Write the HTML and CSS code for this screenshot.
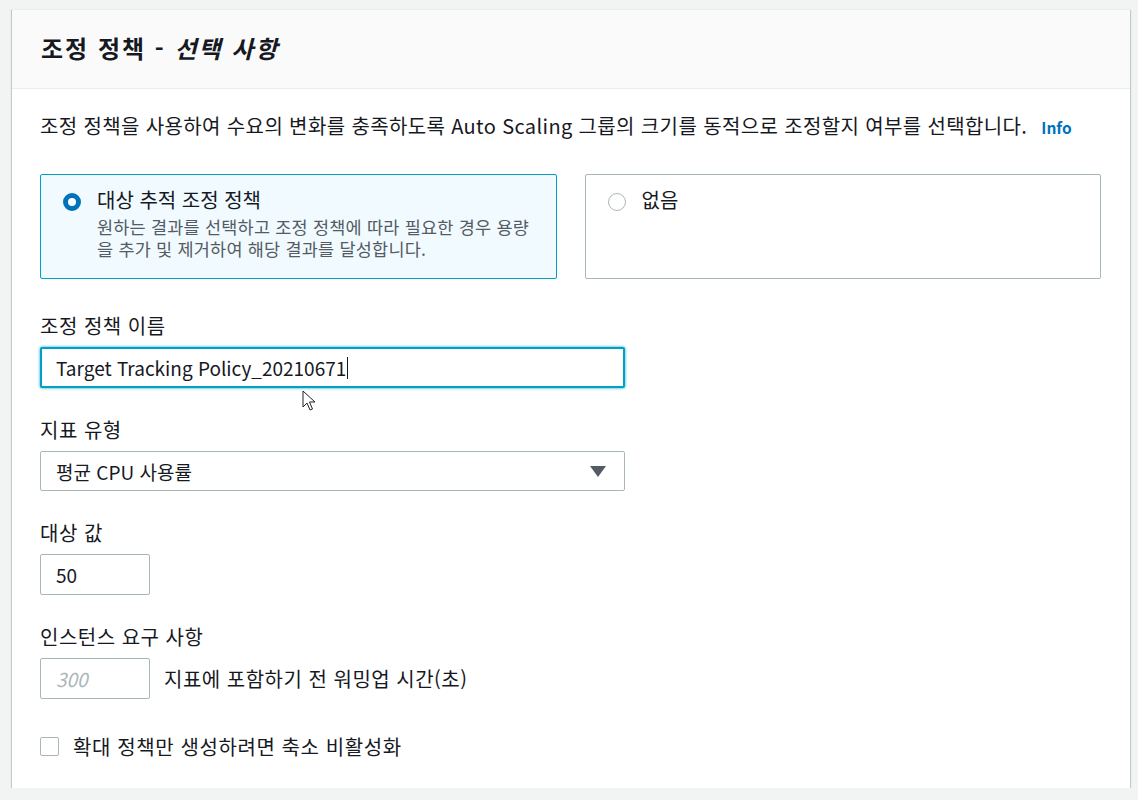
FILE: index.html
```html
<!DOCTYPE html>
<html lang="ko">
<head>
    <meta charset="UTF-8" />
    <title>조정 정책</title>
    <link rel="stylesheet" href="styles.css">
</head>
<body>
    <div class="panel">
        <div class="panel-header">
            <h2>조정 정책 - <i>선택 사항</i></h2>
        </div>
        <div class="panel-body">
            <p class="desc">조정 정책을 사용하여 수요의 변화를 충족하도록 Auto Scaling 그룹의 크기를 동적으로 조정할지 여부를 선택합니다. <a href="#" class="info">Info</a></p>

            <div class="tiles">
                <div class="tile selected">
                    <span class="radio checked"></span>
                    <div class="tile-text">
                        <div class="tile-title">대상 추적 조정 정책</div>
                        <div class="tile-sub">원하는 결과를 선택하고 조정 정책에 따라 필요한 경우 용량을 추가 및 제거하여 해당 결과를 달성합니다.</div>
                    </div>
                </div>
                <div class="tile">
                    <span class="radio"></span>
                    <div class="tile-text">
                        <div class="tile-title">없음</div>
                    </div>
                </div>
            </div>

            <div class="field first">
                <label>조정 정책 이름</label>
                <div class="input wide focused">Target Tracking Policy_20210671<span class="caret"></span></div>
                <svg class="pointer" width="14" height="22" viewBox="0 0 14 22">
                    <path d="M1 1 L1 17 L5 13 L8 20 L10.5 19 L7.5 12 L13 12 Z" fill="#fff" stroke="#222" stroke-width="1"/>
                </svg>
            </div>

            <div class="field">
                <label>지표 유형</label>
                <div class="input wide select">평균 CPU 사용률<span class="arrow"></span></div>
            </div>

            <div class="field">
                <label>대상 값</label>
                <div class="input small">50</div>
            </div>

            <div class="field">
                <label>인스턴스 요구 사항</label>
                <div class="row">
                    <div class="input small placeholder">300</div>
                    <span class="hint">지표에 포함하기 전 워밍업 시간(초)</span>
                </div>
            </div>

            <div class="check-row">
                <span class="checkbox"></span>
                <span>확대 정책만 생성하려면 축소 비활성화</span>
            </div>
        </div>
    </div>
</body>
</html>
```

FILE: styles.css
```css
body {
    font-family: "Noto Sans CJK KR", "Noto Sans", sans-serif;
    background-color: #f2f3f3;
    color: #16191f;
    margin: 0;
    padding: 9px 8px 0 12px;
}
.panel {
    background: #fff;
    box-shadow: 0 1px 1px 0 rgba(0, 28, 36, .3), 1px 1px 1px 0 rgba(0, 28, 36, .15), -1px 1px 1px 0 rgba(0, 28, 36, .15);
    border-top: 1px solid #eaeded;
}
.panel-header {
    background: #fafafa;
    border-bottom: 1px solid #eaeded;
    height: 79px;
    box-sizing: border-box;
    display: flex;
    align-items: center;
    padding: 0 29px 4px;
}
.panel-header h2 {
    margin: 0;
    font-size: 24px;
    font-weight: 700;
    letter-spacing: 2px;
}
.panel-body {
    padding: 21px 29px 30px 28px;
}
.desc {
    margin: 0;
    height: 32px;
    font-size: 20px;
    line-height: 32px;
    letter-spacing: .37px;
}
.info {
    color: #0073bb;
    font-weight: 700;
    font-size: 15.5px;
    letter-spacing: 0;
    text-decoration: none;
    margin-left: 8px;
}
.tiles {
    display: flex;
    gap: 28px;
    margin-top: 32px;
}
.tile {
    flex: 1;
    min-width: 0;
    height: 105px;
    box-sizing: border-box;
    border: 1px solid #aab7b8;
    border-radius: 2px;
    display: flex;
    padding: 13px 19px 0 22px;
    gap: 16px;
}
.tile.selected {
    background: #f1faff;
    border-color: #00a1c9;
}
.tile-text {
    flex: 1;
    min-width: 0;
}
.radio {
    width: 18px;
    height: 18px;
    box-sizing: border-box;
    border: 1px solid #aab7b8;
    border-radius: 50%;
    flex-shrink: 0;
    margin-top: 5px;
}
.radio.checked {
    border: 5px solid #0073bb;
    background: #fff;
}
.tile-title {
    font-size: 20px;
    line-height: 24px;
}
.tile-sub {
    font-size: 17.5px;
    letter-spacing: .2px;
    color: #545b64;
    line-height: 22px;
    margin-top: 4px;
}
.field {
    margin-top: 30px;
    position: relative;
}
.field.first {
    margin-top: 35px;
}
.field label {
    display: block;
    font-size: 20px;
    letter-spacing: .5px;
    line-height: 23px;
    margin-bottom: 10px;
}
.input {
    box-sizing: border-box;
    height: 41px;
    border: 1px solid #aab7b8;
    border-radius: 2px;
    padding: 0 15px;
    font-size: 19px;
    display: flex;
    align-items: center;
    background: #fff;
}
.input.wide {
    width: 585px;
}
.input.small {
    width: 110px;
}
.input.focused {
    border: 2px solid #00a1c9;
    padding: 0 14px;
    box-shadow: 0 0 3px #00a1c9;
}
.input.select {
    height: 40px;
    justify-content: space-between;
}
.caret {
    display: inline-block;
    width: 1px;
    height: 22px;
    background: #16191f;
    margin-left: 1px;
}
.arrow {
    width: 0;
    height: 0;
    border-left: 8px solid transparent;
    border-right: 8px solid transparent;
    border-top: 11px solid #545b64;
    margin-right: 3px;
}
.placeholder {
    color: #aab7b8;
    font-style: italic;
}
.row {
    display: flex;
    align-items: center;
    gap: 14px;
}
.hint {
    font-size: 20px;
    letter-spacing: .5px;
}
.pointer {
    position: absolute;
    left: 262px;
    top: 76px;
}
.check-row {
    display: flex;
    align-items: center;
    gap: 14px;
    margin-top: 35px;
    height: 24px;
    font-size: 20px;
    letter-spacing: .6px;
}
.checkbox {
    width: 19px;
    height: 19px;
    box-sizing: border-box;
    border: 1px solid #aab7b8;
    border-radius: 2px;
}
```
